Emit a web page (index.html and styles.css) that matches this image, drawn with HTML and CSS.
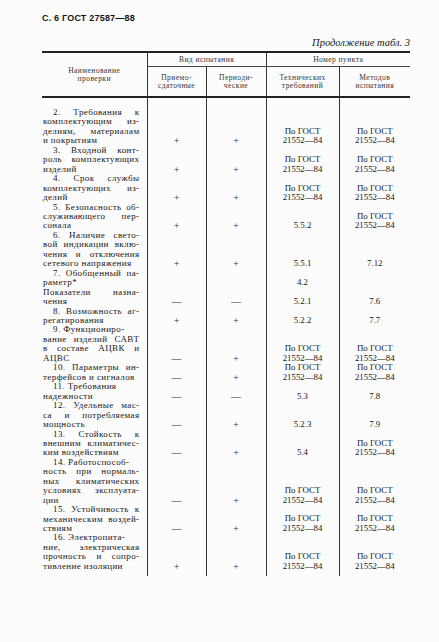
FILE: index.html
```html
<!DOCTYPE html>
<html lang="ru">
<head>
<meta charset="utf-8">
<title>ГОСТ 27587—88, с. 6</title>
<link rel="stylesheet" href="styles.css">
</head>
<body>
<div class="page">
  <div class="runhead">С. 6 ГОСТ 27587—88</div>
  <div class="cont">Продолжение табл. 3</div>
  <table class="t">
    <colgroup>
      <col class="c1"><col class="c2"><col class="c3"><col class="c4"><col class="c5">
    </colgroup>
    <thead>
      <tr class="h1">
        <th rowspan="2" class="hname">Наименование<br>проверки</th>
        <th colspan="2">Вид испытания</th>
        <th colspan="2">Номер пункта</th>
      </tr>
      <tr class="h2">
        <th>Приемо-<br>сдаточные</th>
        <th>Периоди-<br>ческие</th>
        <th>Технических<br>требований</th>
        <th>Методов<br>испытания</th>
      </tr>
    </thead>
    <tbody>
      <tr class="first">
        <td class="n"><span class="i j">2. Требования к</span><span class="j">комплектующим из-</span><span class="j">делиям, материалам</span><span class="l">и покрытиям</span></td>
        <td class="s">+</td><td class="s">+</td><td>По ГОСТ<br>21552—84</td><td>По ГОСТ<br>21552—84</td>
      </tr>
      <tr>
        <td class="n"><span class="i j">3. Входной конт-</span><span class="j">роль комплектующих</span><span class="l">изделий</span></td>
        <td class="s">+</td><td class="s">+</td><td>По ГОСТ<br>21552—84</td><td>По ГОСТ<br>21552—84</td>
      </tr>
      <tr>
        <td class="n"><span class="i j">4. Срок службы</span><span class="j">комплектующих из-</span><span class="l">делий</span></td>
        <td class="s">+</td><td class="s">+</td><td>По ГОСТ<br>21552—84</td><td>По ГОСТ<br>21552—84</td>
      </tr>
      <tr>
        <td class="n"><span class="i j">5. Безопасность об-</span><span class="j">служивающего пер-</span><span class="l">сонала</span></td>
        <td class="s">+</td><td class="s">+</td><td>5.5.2</td><td>По ГОСТ<br>21552—84</td>
      </tr>
      <tr>
        <td class="n"><span class="i j">6. Наличие свето-</span><span class="j">вой индикации вклю-</span><span class="j">чения и отключения</span><span class="l">сетевого напряжения</span></td>
        <td class="s">+</td><td class="s">+</td><td>5.5.1</td><td>7.12</td>
      </tr>
      <tr>
        <td class="n"><span class="i j">7. Обобщенный па-</span><span class="l">раметр*</span></td>
        <td class="s"></td><td class="s"></td><td>4.2</td><td></td>
      </tr>
      <tr>
        <td class="n"><span class="j">Показатели назна-</span><span class="l">чения</span></td>
        <td class="s">—</td><td class="s">—</td><td>5.2.1</td><td>7.6</td>
      </tr>
      <tr>
        <td class="n"><span class="i j">8. Возможность аг-</span><span class="l">регатирования</span></td>
        <td class="s">+</td><td class="s">+</td><td>5.2.2</td><td>7.7</td>
      </tr>
      <tr>
        <td class="n"><span class="i l">9. Функциониро-</span><span class="j">вание изделий САВТ</span><span class="j">в составе АЦВК и</span><span class="l">АЦВС</span></td>
        <td class="s">—</td><td class="s">+</td><td>По ГОСТ<br>21552—84</td><td>По ГОСТ<br>21552—84</td>
      </tr>
      <tr>
        <td class="n"><span class="i j">10. Параметры ин-</span><span class="l">терфейсов и сигналов</span></td>
        <td class="s">—</td><td class="s">+</td><td>По ГОСТ<br>21552—84</td><td>По ГОСТ<br>21552—84</td>
      </tr>
      <tr>
        <td class="n"><span class="i l">11. Требования</span><span class="l">надежности</span></td>
        <td class="s">—</td><td class="s">—</td><td>5.3</td><td>7.8</td>
      </tr>
      <tr>
        <td class="n"><span class="i j">12. Удельные мас-</span><span class="j">са и потребляемая</span><span class="l">мощность</span></td>
        <td class="s">—</td><td class="s">+</td><td>5.2.3</td><td>7.9</td>
      </tr>
      <tr>
        <td class="n"><span class="i j">13. Стойкость к</span><span class="j">внешним климатичес-</span><span class="l">ким воздействиям</span></td>
        <td class="s">—</td><td class="s">+</td><td>5.4</td><td>По ГОСТ<br>21552—84</td>
      </tr>
      <tr>
        <td class="n"><span class="i l">14. Работоспособ-</span><span class="j">ность при нормаль-</span><span class="j">ных климатических</span><span class="j">условиях эксплуата-</span><span class="l">ции</span></td>
        <td class="s">—</td><td class="s">+</td><td>По ГОСТ<br>21552—84</td><td>По ГОСТ<br>21552—84</td>
      </tr>
      <tr>
        <td class="n"><span class="i j">15. Устойчивость к</span><span class="j">механическим воздей-</span><span class="l">ствиям</span></td>
        <td class="s">—</td><td class="s">+</td><td>По ГОСТ<br>21552—84</td><td>По ГОСТ<br>21552—84</td>
      </tr>
      <tr class="last">
        <td class="n"><span class="i l">16. Электропита-</span><span class="j">ние, электрическая</span><span class="j">прочность и сопро-</span><span class="l">тивление изоляции</span></td>
        <td class="s">+</td><td class="s">+</td><td>По ГОСТ<br>21552—84</td><td>По ГОСТ<br>21552—84</td>
      </tr>
    </tbody>
  </table>
</div>
</body>
</html>
```
FILE: styles.css
```css
html, body {
  margin: 0;
  padding: 0;
  background: #fcfcfc;
}
body {
  color: #161616;
  font-family: "Liberation Serif", "Times New Roman", serif;
}
.page {
  width: 368px;
  padding: 12px 29px 0 42px;
}
.runhead {
  font-family: "Liberation Sans", Arial, sans-serif;
  font-weight: bold;
  font-size: 9px;
  line-height: 12px;
  letter-spacing: 0.2px;
}
.cont {
  margin-top: 13px;
  text-align: right;
  font-style: italic;
  font-size: 10.5px;
  line-height: 12px;
}
.t {
  margin-top: 2px;
  width: 368px;
  border-collapse: collapse;
  table-layout: fixed;
  border-top: 2px solid #222;
}
.c1 { width: 105px; }
.c2 { width: 59px; }
.c3 { width: 60px; }
.c4 { width: 73px; }
.c5 { width: 71px; }
.t th {
  font-weight: normal;
  font-size: 7.5px;
  line-height: 8px;
  letter-spacing: 0.45px;
  color: #333;
  padding: 0;
  text-align: center;
  vertical-align: middle;
  border-left: 1px solid #333;
}
.t th.hname { border-left: none; }
.h1 th {
  height: 13px;
  border-bottom: 1px solid #444;
}
.h2 th {
  height: 29px;
}
.t thead tr.h2 th, .t thead th.hname {
  border-bottom: 2px solid #222;
}
.t td {
  padding: 0;
  font-size: 8.8px;
  line-height: 9.5px;
  text-align: center;
  vertical-align: bottom;
  border-left: 1px solid #333;
}
.t td.s {
  font-size: 10px;
  color: #333;
}
.t td.n {
  border-left: none;
  font-size: 9px;
  letter-spacing: 0.4px;
  line-height: 9.45px;
  text-align: left;
  padding: 0 7px 0 1px;
}
.n span { display: block; white-space: nowrap; }
.n .j {
  text-align: justify;
  text-align-last: justify;
  white-space: normal;
}
.n .l { text-align: left; }
.n .i { text-indent: 10px; }
.t tr.first td { padding-top: 10px; }
.t tr.last td { padding-bottom: 5px; }
```
